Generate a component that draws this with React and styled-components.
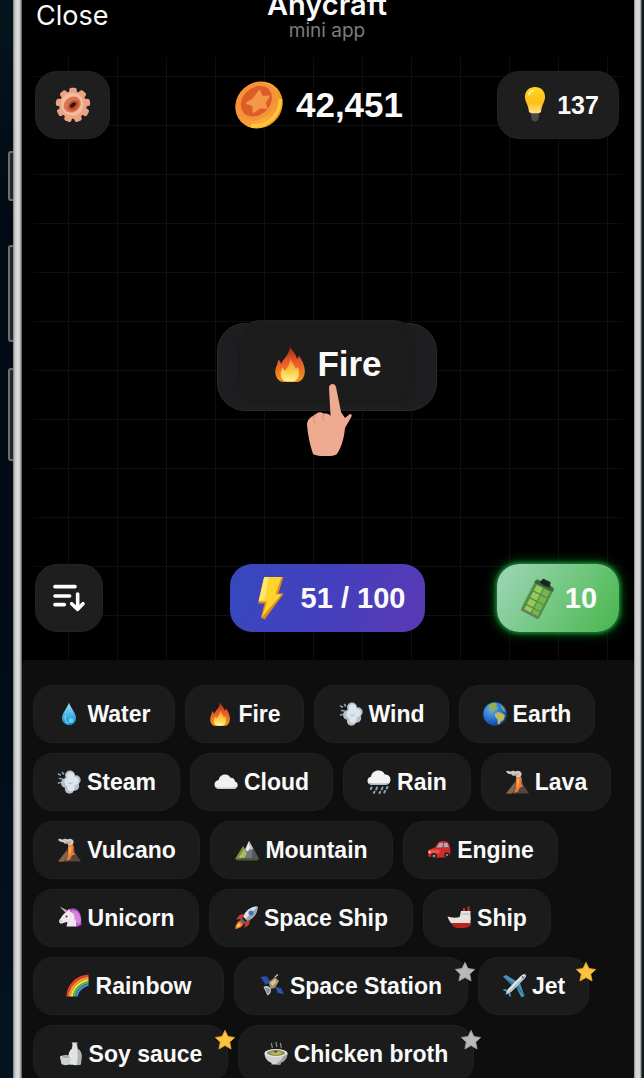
import React from "react";
import styled, { createGlobalStyle } from "styled-components";

const GlobalStyle = createGlobalStyle`
  * {
    box-sizing: border-box;
  }
  body {
    margin: 0;
    background: #020911;
    overflow: hidden;
  }
  button {
    margin: 0;
    padding: 0;
    border: none;
    background: none;
    color: inherit;
    font: inherit;
    cursor: pointer;
  }
`;

/* START: ICONS */
const Fire = () => (
  <>
    <defs>
      <linearGradient id="flame" x1="0" y1="0" x2="0" y2="1">
        <stop offset="0" stopColor="#8f2a12" />
        <stop offset="0.4" stopColor="#e4552a" />
        <stop offset="1" stopColor="#f59a1c" />
      </linearGradient>
      <linearGradient id="flameCore" x1="0" y1="0" x2="0" y2="1">
        <stop offset="0" stopColor="#f58a2e" />
        <stop offset="0.6" stopColor="#ffcf4a" />
        <stop offset="1" stopColor="#fff3a0" />
      </linearGradient>
    </defs>
    <path
      d="M12 0c.6 2.500 3.800 4.600 4.600 8.500.8-.5 1.200-1.200 1.300-2.200 2.400 3.400 4.100 7 4 10.700-.2 4.200-2.300 7-5.500 7H8c-3.600 0-5.800-3-5.800-6.800 0-3 1.600-4.700 1.900-8 1.200.6 1.700 1.700 2 2.900C7.200 8.500 11.800 6 12 0z"
      fill="url(#flame)"
    />
    <path
      d="M12.300 8c.4 2.800 3 4.600 3.600 7.500.5-.4.9-1 1-1.600 1.200 2 1.500 4.400.7 6.600-.8 2-2.300 3.200-4.200 3.200h-2.800c-3 0-4.800-2.200-4.800-5 0-1.700.6-2.800 1-4.200.9.500 1.200 1.200 1.400 2 2-1.700 3.900-4.500 4.100-8.500z"
      fill="url(#flameCore)"
    />
  </>
);

const Water = () => (
  <>
    <defs>
      <linearGradient id="drop" x1="0" y1="0" x2="0" y2="1">
        <stop offset="0" stopColor="#b6e6f8" />
        <stop offset="0.5" stopColor="#4db9e8" />
        <stop offset="1" stopColor="#1583c6" />
      </linearGradient>
    </defs>
    <path
      d="M12 .5c1.200 5 7 10.500 7 15.800a7 7 0 0 1-14 0C5 11 10.800 5.500 12 .5z"
      fill="url(#drop)"
    />
    <path
      d="M8.500 14c-1 3 .2 6 2.500 7"
      stroke="#8fdcf5"
      strokeWidth="1.200"
      fill="none"
      strokeLinecap="round"
    />
    <ellipse cx="14" cy="18.500" rx="2.500" ry="2.500" fill="#5fd0f5" />
  </>
);

const Wind = () => (
  <>
    <g fill="#b4c0ce">
      <circle cx="13" cy="5.500" r="5" />
      <circle cx="19" cy="10" r="4.700" />
      <circle cx="17.500" cy="16" r="4.700" />
      <circle cx="12.500" cy="19" r="4.700" />
      <circle cx="9" cy="13" r="5" />
    </g>
    <g fill="#dde5ee">
      <circle cx="13.500" cy="6" r="3.700" />
      <circle cx="17.500" cy="11" r="4.300" />
      <circle cx="12" cy="12" r="4.500" />
      <circle cx="14" cy="17.500" r="3.700" />
    </g>
    <path
      d="M11 12.500c1.500 2 3.500 1.500 4.500-.5"
      stroke="#a5b3c3"
      strokeWidth="1"
      fill="none"
    />
    <g stroke="#8ba0b7" strokeWidth="1.600" strokeLinecap="round">
      <path d="M1.500 4l2 1M2.500 8.500l3 .5M1.500 13l2-.5M5.500 2.500l1 1.500" />
    </g>
  </>
);

const Earth = () => (
  <>
    <defs>
      <radialGradient id="ocean" cx="0.35" cy="0.3" r="0.8">
        <stop offset="0" stopColor="#5cb4f2" />
        <stop offset="0.6" stopColor="#2467c9" />
        <stop offset="1" stopColor="#123a8c" />
      </radialGradient>
    </defs>
    <circle cx="12" cy="12" r="11.800" fill="url(#ocean)" />
    <path
      d="M5 4C7 2 9 1 12 .8l2 1.500-1.500 2 2.500 1-2 2.500-2.500 1-.5 2.500-2-1-1.500-3z"
      fill="#8fae62"
    />
    <path
      d="M12 11.500l3-1.500 4 1 3 2.500-1.500 4.500-2.500 1.500-2 3-1.200-.500-.3-4.500-2.500-3z"
      fill="#b9bb5c"
    />
    <path d="M17 2l4 4 1.500 4-2.500-1-2-3.500z" fill="#7ba85a" />
  </>
);

const Cloud = () => (
  <>
    <path
      d="M5.500 19C2.500 19 .5 17 .5 14.500S2.300 10.300 4.700 10C5 7 7.500 4.500 11 4.500c2.600 0 4.500 1.200 5.500 3.300 3 0 4.300 1.700 4.500 3.700 1.600.4 2.700 1.700 2.700 3.500 0 2.300-1.800 4-4.200 4z"
      fill="#f1f1f1"
    />
    <path
      d="M1 16.500c3 1.500 19 1.500 22.300-.3-.6 1.700-2 2.800-3.800 2.800h-14c-2 0-3.700-1-4.500-2.500z"
      fill="#c9cdd1"
    />
  </>
);

const Rain = () => (
  <>
    <path
      d="M4.500 14.500c-2.500 0-4-1.700-4-3.800S2 7 4 6.700C4.500 3 7.500.5 11.500.5c3 0 5.300 1.500 6.300 4 3.200-.2 5.700 2 5.700 5s-2.200 5-5 5z"
      fill="#f3f3f3"
    />
    <path d="M1 12.500c4 1.200 17 1.200 22 0-1 1.400-2.700 2.500-4.500 2.500h-14c-1.600 0-3-1-3.500-2.500z" fill="#b4bac0" />
    <g stroke="#8ba7bb" strokeWidth="2" strokeLinecap="round">
      <path d="M4.500 17.500l-.7 1.500M10 17.500l-.8 2M15.500 17.500l-.8 2M20.500 17l-.8 1.500M7.500 21.700l-.6 1.200M13 22l-.5 1M18 21l-.7 1.500" />
    </g>
  </>
);

const Volcano = () => (
  <>
    <path d="M1 23.500l9-12 2-5h4l2 8 6 9z" fill="#54473f" />
    <path d="M1 23.500l9-11 1.500 4-4.500 7z" fill="#83674d" />
    <path
      d="M11 6l4-1 1.800 4-.5 4.500 1.700 3-3 1-2 4-4 1.500 2-5.500v-4z"
      fill="#ef7a32"
    />
    <path d="M12.500 9l2-.5-.5 5-2 5z" fill="#ffb54d" />
    <path
      d="M1 1.500C2.500.3 4 .8 5.200 1.800 7 .6 9 .5 10.500 1.500c2-1.600 5.500-.6 6 1.700.4 2-.8 3.800-3 4-1.500.2-2.500-.5-3-1.500-1.800.5-3.300-.2-4-1.500C4.500 4.500 2 3.500 1 1.500z"
      fill="#cfc9c6"
    />
    <path d="M9 4.500c1.500 1 3.500.8 4.500-1" stroke="#8d8783" fill="none" />
  </>
);

const Mountain = () => (
  <>
    <path d="M5 21L14 3l10 18z" fill="#70777c" />
    <path d="M14 3l4.300 8-2 1.500-1.500-2-2 3-2.600-1.500z" fill="#e8edf0" />
    <path d="M14 3l1 6.500 2.500 4-1 7.500H24z" fill="#51575b" />
    <path d="M14 3l4.200 7.800-1.700.7-1.500-2z" fill="#c4ccd1" />
    <path d="M0 21l8-13 3.500 5L7 21z" fill="#7c9142" />
    <path d="M3 21l6-10 2.700 4L9 21z" fill="#b3ba5d" />
    <path d="M0 21c5-1.500 18-1.500 24 0l-2 1.500H2z" fill="#4c5a35" />
  </>
);

const Car = () => (
  <>
    <path
      d="M1 12.500c2-1.500 4.500-2.500 7-3L11.500 4c2.500-1.500 7-1.500 9.500 0l2 5 .5 6-2 4-13 1-7-1.500z"
      fill="#d32b2b"
    />
    <path d="M9.500 9.500L12.500 5h3.500l-.5 4.300zM17 5h3.300l1.500 4-5 .3z" fill="#9fb3bd" />
    <path d="M1 12.500c3-.8 8-1 12-.3l-1 3.300-11-.5z" fill="#ee5148" />
    <circle cx="7" cy="18" r="3" fill="#232323" />
    <circle cx="7" cy="18" r="1.300" fill="#9a9a9a" />
    <circle cx="20" cy="17" r="2.700" fill="#232323" />
    <circle cx="20" cy="17" r="1.100" fill="#9a9a9a" />
    <circle cx="2.700" cy="14.300" r="1.100" fill="#ffe9b0" />
  </>
);

const Unicorn = () => (
  <>
    <path d="M10 4c5-3 11-1 12.500 5 1 4 .5 7 1 10l-5 2-6-6z" fill="#b055c9" />
    <path d="M15 4c4 1 6 4 6 8l-2 6-5-6z" fill="#7c4fd0" />
    <path
      d="M8 6l3-3 1.500 3c4 1 6 4.500 6 8.500l-.5 6H8.500l1-4.500C7.500 16 6 17 4 17.500c-1.500.3-3-.8-3-2.300 0-1.200 1-2.200 2-3.500C4.500 9.500 6 7.500 8 6z"
      fill="#efe6f2"
    />
    <path d="M7.500 6.500L1.500.5l8 4z" fill="#e7a3d8" />
    <path d="M12 5c3 1 5 4 4.500 8l4 6 2.500-4C23 8 18 2.500 12 5z" fill="#d884d8" />
    <circle cx="8.500" cy="10.500" r="1" fill="#3b2748" />
    <path d="M2 14.500c.5.800 1.500 1 2.300.6" stroke="#b58bb9" fill="none" />
  </>
);

const Rocket = () => (
  <>
    <path d="M23.500.5c-6-.3-11 3.200-14.500 10l4.500 4.500c7-3.500 10.300-8.500 10-14.500z" fill="#dfe4e8" />
    <path d="M23.500.5c.3 6-3 11-10 14.500l-2-2z" fill="#9aa6b0" />
    <circle cx="17" cy="7" r="2.500" fill="#3c76b8" />
    <path d="M11 7.500L5.500 9 2 13.500l6-.5zM16.500 13L15 18.500 10.500 22l.5-6z" fill="#c93a35" />
    <path d="M7.500 12l4.500 4.500-2.500 1.500-3.500-3.500z" fill="#5d6b78" />
    <path d="M6 14.500L9.500 18c-1.500 3-4 4.500-8.500 5 .5-4.500 2-7 5-8.500z" fill="#f26a2a" />
    <path d="M5.500 17L7 18.500C6 20.500 4.500 21 2.500 21.500 3 19.500 3.500 18 5.500 17z" fill="#ffd851" />
  </>
);

const Ship = () => (
  <>
    <path d="M16 6V2h2v4M20.500 5V.5h2V5" fill="#c7322c" />
    <path d="M14 5h9.500v9H12z" fill="#e8e4df" />
    <path d="M15.500 8h7" stroke="#a9b0b5" strokeWidth="1" />
    <path d="M.5 10.500c4 1.300 8 1.500 12.500.500h10.500v7H5c-2-1.500-3.500-4.500-4.500-7.500z" fill="#e9e2da" />
    <path d="M4 17h19.500v3c-3 2.200-13 2.700-16.500 1z" fill="#b92320" />
  </>
);

const Rainbow = () => (
  <g fill="none" strokeWidth="2.400">
    <path d="M1.500 22.500C2 11.500 10.500 2.500 22.500 1.800" stroke="#e5402f" />
    <path d="M3.700 22.500C4.300 13 12 5 22.500 4" stroke="#f49a2c" />
    <path d="M5.900 22.500C6.500 14.500 13.500 7.300 22.500 6.200" stroke="#f6dc4a" />
    <path d="M8.100 22.500C8.700 16 15 9.500 22.500 8.400" stroke="#59b653" />
    <path d="M10.300 22.500C10.900 17.500 16.500 11.700 22.500 10.600" stroke="#3d8be0" />
  </g>
);

const Satellite = () => (
  <>
    <path d="M.5 3l6-1 4.500 6-5.500 3z" fill="#2848a8" />
    <path d="M15.500 13l5.500 1 3 6-6.500-1z" fill="#2450b4" />
    <path d="M3 3l4.500 7M17 13.500l4 5.500" stroke="#4768bd" strokeWidth=".7" />
    <path d="M9 8l6-5 4 4-4 7-5 1z" fill="#a0926b" />
    <path d="M10 9l5-4 1.500 3-4 4z" fill="#d3c794" />
    <path d="M3.500 13c3-2.500 7-.5 7.500 3 .3 2.500-1.500 4.500-3.500 5.500z" fill="#c9ccd0" />
    <path d="M5 14c2.500-1 5 .5 5.500 3l-3 3z" fill="#8b9095" />
    <path d="M15 3l3-2.500" stroke="#c7c7c7" strokeWidth="1.200" />
  </>
);

const Plane = () => (
  <>
    <path d="M1 2.500L4 1l11 6.500-4.500 4.500zM22.500 22l-3 1.500-6-11.500 4-4.500z" fill="#4596bb" />
    <path d="M1 2.500l9.500 9.500 2-2zM22.500 22L13 12l2-2z" fill="#2c7196" />
    <path d="M.5 16l2-1 5 1.500-1.500 2zM8 23.500l1-2-1.500-5-2 1.500z" fill="#4596bb" />
    <path d="M23.500.5c-1.500-.8-3 0-4.500 1.300L6 15l-2.500 5.500L9 18 22 5c1.500-1.500 2.300-3 1.500-4.500z" fill="#e3e8ec" />
    <path d="M23.500.5c.8 1.500 0 3-1.500 4.500L9 18l-5.500 2.500z" fill="#b3bdc5" />
    <path d="M20 2.500l1.700 1.700" stroke="#32505f" strokeWidth="1.200" />
  </>
);

const Soy = () => (
  <>
    <path
      d="M12.500.5h6l-.5 1.500.5 4.500c3 2 4 4.500 4 7.500l-.5 8c0 1.500-12 1.500-12 0l-.5-8c0-3 1-5.500 3.500-7.500l.5-4.500z"
      fill="#e1e3e4"
    />
    <path d="M17 1l1.500-.5-.5 1.500.5 4.500c3 2 4 4.500 4 7.500l-.5 8c-1 1-3 1.200-4.500 1.200 2-7 1.500-13-.5-22.200z" fill="#adb2b5" />
    <path d="M1 15h11.500l-1.500 7c-1.500 1.500-7 1.500-8.500 0z" fill="#cdd0d2" />
    <ellipse cx="6.800" cy="15" rx="5.700" ry="1.800" fill="#f2f2f2" />
    <ellipse cx="6.800" cy="15.200" rx="4.300" ry="1.100" fill="#a3a8ab" />
  </>
);

const Soup = () => (
  <>
    <path
      d="M8 1c-2 2 1.500 3 0 5M12.500 0c-2 2 1.500 3 0 5M17 1c-2 2 1.500 3 0 5"
      stroke="#8f9188"
      strokeWidth="1.200"
      fill="none"
    />
    <path d="M.5 11h23c0 5-3 8.500-7 9.800v1.700h-9v-1.700C3.500 19.500.5 16 .5 11z" fill="#cfd2d0" />
    <path d="M13 21c4-2 6.500-5 7-9.500h3.500c-.5 5-3 8-7 9.300v1.700h-4z" fill="#9ba09e" />
    <ellipse cx="12" cy="11" rx="11.500" ry="4" fill="#e8e9e4" />
    <ellipse cx="12" cy="11" rx="9.300" ry="2.900" fill="#8b9157" />
    <path d="M6 11l3-1.500 2 1.500 3-2 4 1.500-2 2-4 .5-3-.5z" fill="#c8b35e" />
    <path d="M9 10l3-2 2 1-2 2z" fill="#4d6a2c" />
  </>
);

const Gear = () => (
  <>
    <g fill="#eba483">
      <circle cx="12" cy="12" r="9.200" />
      {[0, 40, 80, 120, 160, 200, 240, 280, 320].map((a) => (
        <rect
          key={a}
          x="9.500"
          y="0.500"
          width="5"
          height="6"
          rx="1.500"
          transform={`rotate(${a} 12 12)`}
        />
      ))}
    </g>
    <circle cx="11.500" cy="11.500" r="7.500" fill="#f4bc9e" />
    <ellipse cx="11.500" cy="11.700" rx="6" ry="5" fill="#db7450" transform="rotate(-35 11.500 11.700)" />
    <ellipse cx="12.300" cy="12.300" rx="4" ry="3" fill="#b9502f" transform="rotate(-40 12.300 12.300)" />
    <ellipse cx="12" cy="12" rx="2.300" ry="1.300" fill="#35150c" transform="rotate(-40 12 12)" />
  </>
);

const Coin = () => (
  <>
    <defs>
      <linearGradient id="coinRim" x1="0" y1="0" x2="1" y2="1">
        <stop offset="0" stopColor="#f28a32" />
        <stop offset="0.6" stopColor="#fbac35" />
        <stop offset="1" stopColor="#ed7c20" />
      </linearGradient>
    </defs>
    <ellipse cx="12" cy="12" rx="12.300" ry="11.300" fill="url(#coinRim)" transform="rotate(-42 12 12)" />
    <path d="M8 22.500c8 .5 14.500-5 14.700-13.500" stroke="#ffc63c" strokeWidth="1.800" fill="none" />
    <ellipse cx="10.800" cy="10.300" rx="10.500" ry="8.700" fill="#f5923a" transform="rotate(-42 10.800 10.300)" />
    <ellipse cx="10.700" cy="10.100" rx="8.600" ry="6.700" fill="#dc5d28" transform="rotate(-42 10.700 10.100)" />
    <path
      d="M12.200 5l1.300 3 3.300-.3-2 3 .8 2.800-3-.4-3.300 2.400-.1-3.300-3.300-1.200 3.200-1.800z"
      fill="#f39848"
      stroke="#f39848"
      strokeLinejoin="round"
    />
  </>
);

const Bulb = () => (
  <>
    <defs>
      <linearGradient id="bulb" x1="0" y1="0" x2="0" y2="1">
        <stop offset="0" stopColor="#ffd91f" />
        <stop offset="0.6" stopColor="#fdbd1b" />
        <stop offset="1" stopColor="#ffe68a" />
      </linearGradient>
    </defs>
    <path d="M9 17h6l-.8 4.500c-.5 2-3.900 2-4.400 0z" fill="#4a4a4a" />
    <path d="M12 0c4 0 6.700 2.800 6.700 6.500 0 3.500-2.200 5-2.700 10-.2 1.400-7.800 1.400-8 0-.5-5-2.700-6.500-2.700-10C5.300 2.800 8 0 12 0z" fill="url(#bulb)" />
    <path d="M8 5c.5-1.700 1.700-2.500 3-2.800" stroke="#fff0a0" strokeWidth="1.200" fill="none" strokeLinecap="round" />
  </>
);

const Bolt = () => (
  <>
    <path d="M8.300.5h10.500L16 9.500h3L8.500 23.700l-2-1L8.500 15H5z" fill="#d98a22" />
    <path d="M8.300.5h9.500L14.500 10h3.300L7 22.500l2.800-8.500-4.600-.2z" fill="#fed32c" />
    <path d="M8.300.5h2.500L8.500 13l-3.200.7z" fill="#ffe56a" />
  </>
);

const Battery = () => (
  <g transform="rotate(27 12 12)">
    <rect x="9" y="-.5" width="6" height="3" rx="1" fill="#1c2f27" />
    <rect x="5.500" y="1.500" width="13" height="22" rx="1.500" fill="#4f8f48" />
    <path d="M5.500 3.500c0-2.500 13-2.500 13 0v.8h-13z" fill="#3c5c43" />
    <ellipse cx="12" cy="2" rx="3.500" ry="1.200" fill="#16241f" />
    <g fill="#9bc85a">
      <path d="M7.500 5h4.500v4H7.500zM7.500 9.800h4.500v4H7.500zM7.500 14.600h4.500v4H7.500zM7.500 19.400h4.500v2.800H7.500z" />
    </g>
    <g fill="#7ab54b">
      <path d="M12.800 5h4.200v4h-4.200zM12.800 9.800h4.200v4h-4.200zM12.800 14.600h4.200v4h-4.200zM12.800 19.400h4.200v2.800h-4.200z" />
    </g>
    <path d="M5.500 22.500h13l-.5 1.500h-12z" fill="#66805f" />
  </g>
);

const Sort = () => (
  <g fill="none" stroke="#fff" strokeWidth="2.700" strokeLinecap="round" strokeLinejoin="round">
    <path d="M1.500 3.500h15M1.500 10.500h11M1.500 17h7M18.500 9v11M14 16.300L18.500 20.500l4-4.200" />
  </g>
);

const Star = ({ gold }) => (
  <path
    d="M12 1.500l3.200 6.800 7.300.9-5.400 5.100 1.500 7.400-6.600-3.700-6.600 3.700 1.500-7.400L1.500 9.200l7.300-.9z"
    fill={gold ? "#f9c440" : "#b9b9bb"}
    stroke={gold ? "#eba52c" : "#a0a0a3"}
    strokeLinejoin="round"
  />
);

const Hand = () => (
  <>
    <path
      d="M22 3c1-4 6-4 7 0l5 25 4 6 5-4c2 0 2 2 1 3.500L38 44c-1 10-3 18-8 26-3 3-19 3-24 0C3 61 1 52 0 41c0-6 4-8 8-10 2-3 6-4 9-1 3-1 5 0 6.500 2z"
      fill="#efab91"
    />
    <path d="M8 31c-2 3-1 6 0 8M17 30c-2 2-1 5 0 7" stroke="#dd9880" strokeWidth="1.500" fill="none" strokeLinecap="round" />
  </>
);
/* END: ICONS */

const elements = [
  { name: "Water", icon: Water, width: 142 },
  { name: "Fire", icon: Fire, width: 119 },
  { name: "Wind", icon: Wind, width: 135 },
  { name: "Earth", icon: Earth, width: 136 },
  { name: "Steam", icon: Wind, width: 147 },
  { name: "Cloud", icon: Cloud, width: 143 },
  { name: "Rain", icon: Rain, width: 128 },
  { name: "Lava", icon: Volcano, width: 130 },
  { name: "Vulcano", icon: Volcano, width: 167 },
  { name: "Mountain", icon: Mountain, width: 183 },
  { name: "Engine", icon: Car, width: 155 },
  { name: "Unicorn", icon: Unicorn, width: 166 },
  { name: "Space Ship", icon: Rocket, width: 204 },
  { name: "Ship", icon: Ship, width: 128 },
  { name: "Rainbow", icon: Rainbow, width: 191 },
  { name: "Space Station", icon: Satellite, width: 234, star: "silver" },
  { name: "Jet", icon: Plane, width: 111, star: "gold" },
  { name: "Soy sauce", icon: Soy, width: 195, star: "gold" },
  { name: "Chicken broth", icon: Soup, width: 236, star: "silver" },
];

const App = () => {
  return (
    <Page>
      <GlobalStyle />
      <LeftEdge>
        <SideKey tall={50} />
        <SideKey tall={97} />
        <SideKey tall={93} />
      </LeftEdge>
      <Screen>
        <Header>
          <Close>Close</Close>
          <Heading>
            <Title>Anycraft</Title>
            <Subtitle>mini app</Subtitle>
          </Heading>
        </Header>
        <Canvas>
          <Bar>
            <Control wide={75} aria-label="Settings">
              <Icon viewBox="0 0 24 24" size={36}>
                <Gear />
              </Icon>
            </Control>
            <Score>
              <Icon viewBox="0 0 24 24" size={48}>
                <Coin />
              </Icon>
              42,451
            </Score>
            <Hint wide={122}>
              <Icon viewBox="0 0 24 24" size={36}>
                <Bulb />
              </Icon>
              137
            </Hint>
          </Bar>
          <Field>
            <Tile>
              <Icon viewBox="0 0 24 24" size={36}>
                <Fire />
              </Icon>
              <span>Fire</span>
              <Pointer viewBox="0 0 46 72">
                <Hand />
              </Pointer>
            </Tile>
          </Field>
          <Bar>
            <Control wide={68} aria-label="Sort">
              <Icon viewBox="0 0 24 24" size={32}>
                <Sort />
              </Icon>
            </Control>
            <Energy wide={195}>
              <Icon viewBox="0 0 24 24" size={44}>
                <Bolt />
              </Icon>
              51 / 100
            </Energy>
            <Refill wide={122}>
              <Icon viewBox="0 0 24 24" size={38}>
                <Battery />
              </Icon>
              10
            </Refill>
          </Bar>
        </Canvas>
        <Inventory>
          {elements.map(({ name, icon: Drawing, width, star }) => (
            <Chip key={name} wide={width}>
              <Icon viewBox="0 0 24 24" size={24}>
                <Drawing />
              </Icon>
              {name}
              {star && (
                <Badge viewBox="0 0 24 24">
                  <Star gold={star === "gold"} />
                </Badge>
              )}
            </Chip>
          ))}
        </Inventory>
      </Screen>
      <RightEdge />
    </Page>
  );
};

export default App;

/* START: PHONE */
const Page = styled.div`
  display: flex;
  height: 100vh;
  overflow: hidden;
  color: #fafafa;
  font-family: "Liberation Sans", Arial, sans-serif;
`;

const LeftEdge = styled.div`
  flex: 0 0 22px;
  display: flex;
  flex-direction: column;
  align-items: flex-start;
  padding: 151px 0 0 8px;
  background: linear-gradient(
      90deg,
      transparent 13px,
      #77777a 13px,
      #c9c9c7 15px,
      #dededb 18px,
      #c4c4c2 20px,
      #4a4a4a 22px
    ),
    linear-gradient(#04161b, #020a14 20%, #020b18 60%, #031420);
`;

const SideKey = styled.div`
  width: 5px;
  height: ${(props) => props.tall}px;
  margin-bottom: ${(props) => (props.tall === 50 ? 44 : 26)}px;
  border: 2px solid #6c7074;
  border-right: none;
  border-radius: 3px 0 0 3px;
  background: #23272b;
`;

const RightEdge = styled.div`
  flex: 0 0 10px;
  background: linear-gradient(
    90deg,
    #8b8b8b,
    #d9d9d9 2px,
    #d4d4d4 6px,
    #7b8082 7px,
    #14191c 8px
  );
`;

const Screen = styled.main`
  flex: 1;
  min-width: 0;
  display: flex;
  flex-direction: column;
  background: #000000;
`;
/* END: PHONE */

/* START: HEADER */
const Header = styled.header`
  flex: none;
  height: 41px;
  padding: 0 16px 0 14px;
  display: grid;
  grid-template-columns: 1fr auto 1fr;
  align-items: end;
  font-family: Inter, sans-serif;
`;

const Close = styled.button`
  align-self: start;
  justify-self: start;
  font-size: 27px;
  line-height: 32px;
`;

const Heading = styled.div`
  height: 41px;
  display: flex;
  flex-direction: column;
  justify-content: flex-end;
  text-align: center;
`;

const Title = styled.h1`
  margin: 0;
  font-size: 29px;
  font-weight: 600;
  line-height: 32px;
`;

const Subtitle = styled.span`
  color: #7d7d7d;
  font-size: 19px;
  line-height: 20px;
`;
/* END: HEADER */

/* START: CANVAS */
const Canvas = styled.section`
  flex: none;
  padding: 30px 15px 28px 13px;
  background: linear-gradient(#000000 8px, transparent 24px),
    linear-gradient(
      90deg,
      #000000 4px,
      transparent 20px,
      transparent calc(100% - 20px),
      #000000 calc(100% - 4px)
    ),
    linear-gradient(90deg, #0f0f0f 1px, transparent 1px) 46px 0 / 49px 49px,
    linear-gradient(#0f0f0f 1px, transparent 1px) 0 35px / 49px 49px;
`;

const Bar = styled.div`
  display: grid;
  grid-template-columns: 1fr auto 1fr;
  align-items: center;
  > :first-child {
    justify-self: start;
  }
  > :last-child {
    justify-self: end;
  }
`;

const Icon = styled.svg`
  flex: none;
  width: ${(props) => props.size}px;
  height: ${(props) => props.size}px;
  overflow: visible;
`;

const Control = styled.button`
  display: flex;
  align-items: center;
  justify-content: center;
  width: ${(props) => props.wide}px;
  height: 68px;
  border-radius: 22px;
  background: #1e1e1e;
  border: 1px solid #232323;
`;

const Score = styled.div`
  display: flex;
  align-items: center;
  gap: 13px;
  padding-right: 16px;
  font-size: 35px;
  font-weight: bold;
`;

const Hint = styled(Control)`
  gap: 4px;
  font-size: 25px;
  font-weight: bold;
`;

const Energy = styled(Control)`
  gap: 8px;
  border: none;
  background: linear-gradient(115deg, #3549bd, #4440bd 50%, #5b38b4);
  font-size: 29px;
  font-weight: bold;
`;

const Refill = styled(Control)`
  gap: 8px;
  border: none;
  background: linear-gradient(125deg, #9fd6b9, #6fc67c 55%, #48b54d);
  box-shadow: 0 0 4px 1px #1f9a4a, 0 0 12px 2px #06560f;
  font-size: 29px;
  font-weight: bold;
`;

const Field = styled.div`
  display: flex;
  align-items: center;
  justify-content: center;
  min-height: 425px;
  padding-top: 31px;
`;

const Tile = styled.button`
  position: relative;
  display: flex;
  align-items: center;
  justify-content: center;
  gap: 9px;
  width: 220px;
  height: 88px;
  padding-bottom: 6px;
  border: 1px solid #2a282c;
  border-radius: 28px;
  background: #1e1d1f;
  isolation: isolate;
  font-size: 35px;
  font-weight: bold;
  &::before {
    content: "";
    position: absolute;
    inset: -4px 17px 2px 17px;
    border-radius: 26px;
    background: #1c1c1c;
    box-shadow: inset 0 0 6px #241f29;
    z-index: -1;
  }
`;

const Pointer = styled.svg`
  position: absolute;
  left: 89px;
  top: 60px;
  width: 46px;
  height: 72px;
`;
/* END: CANVAS */

/* START: INVENTORY */
const Inventory = styled.section`
  flex: 1 0 auto;
  display: flex;
  flex-wrap: wrap;
  align-content: flex-start;
  gap: 10px;
  padding: 25px 11px;
  border-radius: 4px 4px 0 0;
  background: #0e0e0e;
`;

const Chip = styled.button`
  position: relative;
  display: flex;
  align-items: center;
  justify-content: center;
  gap: 6px;
  min-width: ${(props) => props.wide}px;
  height: 58px;
  border: 1px solid #202020;
  border-radius: 20px;
  background: #1b1b1b;
  font-size: 23px;
  font-weight: bold;
`;

const Badge = styled.svg`
  position: absolute;
  top: 3px;
  right: -9px;
  width: 22px;
  height: 22px;
`;
/* END: INVENTORY */
